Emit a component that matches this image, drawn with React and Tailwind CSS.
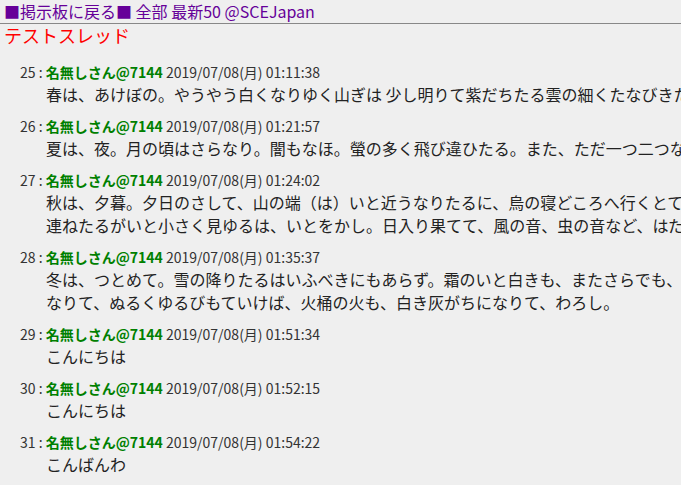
const posts = [
  {
    no: 25,
    date: '2019/07/08(月) 01:11:38',
    lines: ['春は、あけぼの。やうやう白くなりゆく山ぎは 少し明りて紫だちたる雲の細くたなびきたる。'],
  },
  {
    no: 26,
    date: '2019/07/08(月) 01:21:57',
    lines: ['夏は、夜。月の頃はさらなり。闇もなほ。螢の多く飛び違ひたる。また、ただ一つ二つなど、ほのかにうち光りて行くもをかし。雨など降るもをかし。'],
  },
  {
    no: 27,
    date: '2019/07/08(月) 01:24:02',
    lines: [
      '秋は、夕暮。夕日のさして、山の端（は）いと近うなりたるに、烏の寝どころへ行くとて、三つ四つ、二つ三つなど、飛び急ぐさへあはれなり。まいて雁などの',
      '連ねたるがいと小さく見ゆるは、いとをかし。日入り果てて、風の音、虫の音など、はた言ふべきにあらず。',
    ],
  },
  {
    no: 28,
    date: '2019/07/08(月) 01:35:37',
    lines: [
      '冬は、つとめて。雪の降りたるはいふべきにもあらず。霜のいと白きも、またさらでも、いと寒きに、火など急ぎおこして、炭もて渡るも、いとつきづきし。昼に',
      'なりて、ぬるくゆるびもていけば、火桶の火も、白き灰がちになりて、わろし。',
    ],
  },
  { no: 29, date: '2019/07/08(月) 01:51:34', lines: ['こんにちは'] },
  { no: 30, date: '2019/07/08(月) 01:52:15', lines: ['こんにちは'] },
  { no: 31, date: '2019/07/08(月) 01:54:22', lines: ['こんばんわ'] },
];

function Post({ post }) {
  return (
    <div className="mb-[9px]">
      <div className="pl-[20px] text-[14px] leading-[22px] text-[#333] whitespace-nowrap">
        {post.no} : <b className="text-[#008000]">名無しさん@7144</b> {post.date}
      </div>
      <div className="pl-[46px] text-[16px] leading-[23px] text-[#222] whitespace-nowrap">
        {post.lines.map((l, i) => (
          <div key={i}>{l}</div>
        ))}
      </div>
    </div>
  );
}

export default function App() {
  return (
    <div
      className="w-[681px] h-[485px] overflow-hidden bg-[#efefef]"
      style={{ fontFamily: '"Noto Sans CJK JP", "Noto Sans", sans-serif' }}
    >
      <div className="px-[4px] text-[16px] leading-[23px] text-[#660099] whitespace-nowrap">
        <span>■掲示板に戻る■</span> <span>全部</span> <span>最新50</span> <span>@SCEJapan</span>
      </div>
      <div className="border-t border-[#888]" />
      <h1 className="px-[4px] text-[18px] leading-[22px] text-[#ff0000] font-normal">テストスレッド</h1>
      <div className="mt-[15px]">
        {posts.map((p) => (
          <Post key={p.no} post={p} />
        ))}
      </div>
    </div>
  );
}
